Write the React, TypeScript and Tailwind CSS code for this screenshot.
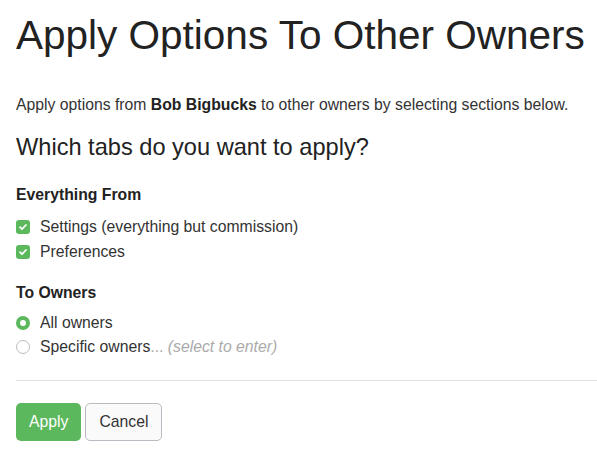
import { useState } from 'react';

const Check = () => (
  <svg viewBox="0 0 14 14" className="h-[14px] w-[14px] shrink-0">
    <rect width="14" height="14" rx="3" fill="#5cb85c" />
    <path d="M4 7.2l2 2 4-4.2" fill="none" stroke="#fff" strokeWidth="1.8" strokeLinecap="round" strokeLinejoin="round" />
  </svg>
);

const Radio = ({ on }: { on: boolean }) =>
  on ? (
    <span className="h-[14px] w-[14px] shrink-0 rounded-full border-[4px] border-[#5cb85c] bg-white" />
  ) : (
    <span className="h-[14px] w-[14px] shrink-0 rounded-full border border-[#b8bcc2] bg-white" />
  );

export default function App() {
  const [target, setTarget] = useState('all');

  return (
    <div className="min-h-screen bg-white pl-4 font-['Liberation_Sans',Arial,sans-serif] text-[#222]">
      <h1 className="pt-[12px] text-[40.5px] leading-[46px]">Apply Options To Other Owners</h1>

      <p className="mt-[37px] text-[15.75px] leading-5 text-[#333]">
        Apply options from <b className="text-[#222]">Bob Bigbucks</b> to other owners by selecting sections below.
      </p>

      <h2 className="mt-[19px] text-[23.6px] leading-[26px]">Which tabs do you want to apply?</h2>

      <h4 className="mt-[25px] text-[15.75px] font-bold leading-5">Everything From</h4>
      <div className="mt-[12px] flex flex-col gap-[5px] text-[15.75px] leading-5 text-[#333]">
        <label className="flex items-center gap-[10px]">
          <Check />
          Settings (everything but commission)
        </label>
        <label className="flex items-center gap-[10px]">
          <Check />
          Preferences
        </label>
      </div>

      <h4 className="mt-[21px] text-[15.75px] font-bold leading-5">To Owners</h4>
      <div className="mt-[10px] flex flex-col gap-[4px] text-[15.75px] leading-5 text-[#333]">
        <label className="flex items-center gap-[10px]" onClick={() => setTarget('all')}>
          <Radio on={target === 'all'} />
          All owners
        </label>
        <label className="flex items-center gap-[10px]" onClick={() => setTarget('specific')}>
          <Radio on={target === 'specific'} />
          <span>
            Specific owners<span className="text-[#aaa]">...</span>{' '}
            <i className="text-[#aaa]">(select to enter)</i>
          </span>
        </label>
      </div>

      <hr className="mt-[23px] border-t border-[#dee2e6]" />

      <div className="mt-[22px] flex gap-[4px]">
        <button className="h-[38px] rounded-[5px] bg-[#5cb85c] px-[13px] text-[15.75px] text-white">Apply</button>
        <button className="h-[38px] rounded-[5px] border border-[#b8bcc2] bg-[#fafafa] px-[13px] text-[15.75px] text-[#333]">
          Cancel
        </button>
      </div>
    </div>
  );
}
